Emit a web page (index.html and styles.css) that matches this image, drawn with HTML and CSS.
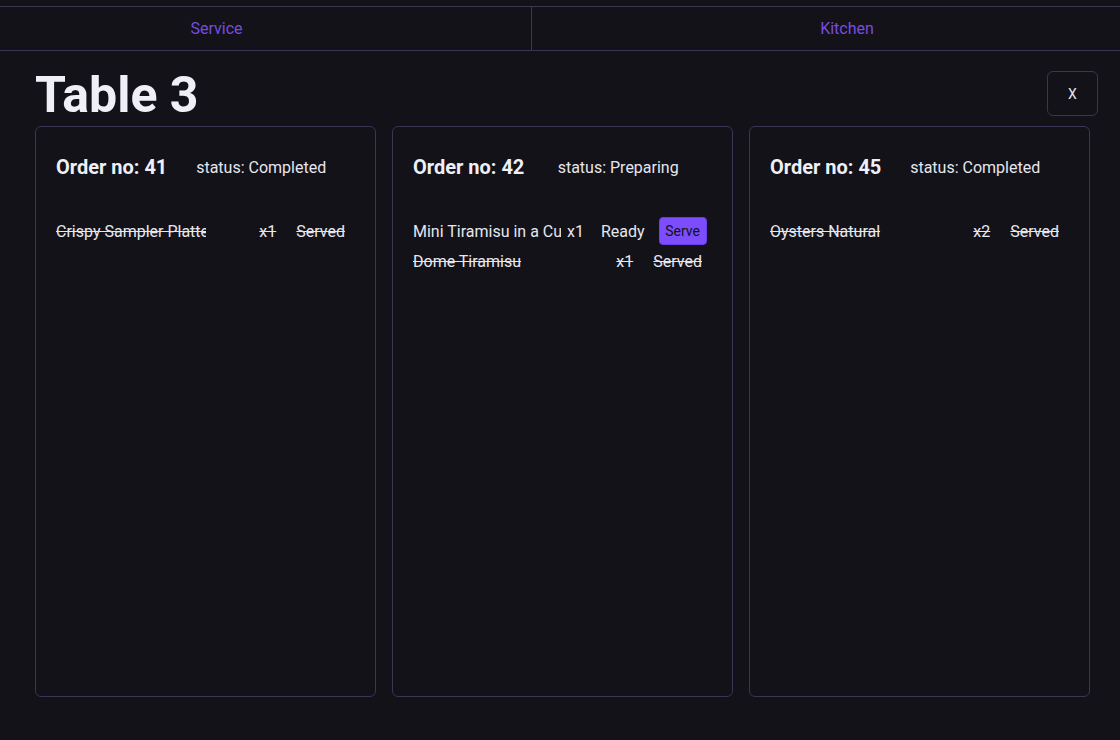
FILE: index.html
```html
<!DOCTYPE html>
<html>
<head>
<meta charset="utf-8">
<link rel="stylesheet" href="styles.css">
</head>
<body>
<nav class="tabs">
  <div class="tab tab-service">Service</div>
  <div class="tab tab-kitchen">Kitchen</div>
</nav>
<main class="page">
  <header class="page-head">
    <h1 class="title">Table 3</h1>
    <button class="close">X</button>
  </header>
  <section class="cards">
    <article class="card">
      <div class="card-head">
        <h2 class="order-no">Order no: 41</h2>
        <span class="status">status: Completed</span>
      </div>
      <div class="items">
        <div class="item done">
          <span class="name">Crispy Sampler Platter</span>
          <span class="spacer"></span>
          <span class="qty">x1</span>
          <span class="state">Served</span>
        </div>
      </div>
    </article>
    <article class="card">
      <div class="card-head">
        <h2 class="order-no">Order no: 42</h2>
        <span class="status">status: Preparing</span>
      </div>
      <div class="items">
        <div class="item action">
          <span class="name">Mini Tiramisu in a Cup</span>
          <span class="qty">x1</span>
          <span class="state">Ready</span>
          <button class="serve">Serve</button>
        </div>
        <div class="item done">
          <span class="name">Dome Tiramisu</span>
          <span class="spacer"></span>
          <span class="qty">x1</span>
          <span class="state">Served</span>
        </div>
      </div>
    </article>
    <article class="card">
      <div class="card-head">
        <h2 class="order-no">Order no: 45</h2>
        <span class="status">status: Completed</span>
      </div>
      <div class="items">
        <div class="item done">
          <span class="name">Oysters Natural</span>
          <span class="spacer"></span>
          <span class="qty">x2</span>
          <span class="state">Served</span>
        </div>
      </div>
    </article>
  </section>
</main>
</body>
</html>
```

FILE: styles.css
```css
html, body {
  margin: 0;
  padding: 0;
  background: #121218;
  color: #e6e6ef;
  font-family: Roboto, "Noto Sans", sans-serif;
}

.tabs {
  margin-top: 6px;
  display: flex;
  border-top: 1px solid #3a3455;
  border-bottom: 1px solid #3a3455;
  height: 43px;
}

.tab {
  display: flex;
  align-items: center;
  justify-content: center;
  font-size: 16px;
  color: #7a4be0;
}

.tab-service {
  width: 532px;
  padding-right: 98px;
  box-sizing: border-box;
  border-right: 1px solid #3a3455;
}

.tab-kitchen {
  flex: 1;
  padding-left: 42px;
}

.page {
  padding: 0 22px 0 35px;
}

.page-head {
  display: flex;
  justify-content: space-between;
  align-items: flex-start;
  padding-top: 13px;
}

.title {
  margin: 0;
  font-size: 50px;
  line-height: 62px;
  font-weight: 700;
  color: #efeff8;
}

.close {
  margin-top: 7px;
  width: 51px;
  height: 45px;
  background: transparent;
  border: 1px solid #3a3455;
  border-radius: 6px;
  color: #e6e6ef;
  font-family: Roboto, sans-serif;
  font-size: 14px;
  cursor: pointer;
}

.cards {
  margin-top: 0;
  display: grid;
  grid-template-columns: repeat(3, 341px);
  gap: 16px;
}

.card {
  height: 571px;
  box-sizing: border-box;
  border: 1px solid #3a3455;
  border-radius: 6px;
  padding: 27px 20px 20px;
}

.card-head {
  display: flex;
  align-items: center;
  height: 26px;
}

.order-no {
  margin: 0;
  font-size: 20px;
  font-weight: 700;
  line-height: 26px;
  color: #efeff8;
}

.status {
  flex: 1;
  text-align: center;
  font-size: 16px;
}

.items {
  margin-top: 36px;
  display: flex;
  flex-direction: column;
}

.item {
  display: flex;
  align-items: center;
  height: 30px;
  font-size: 16px;
  white-space: nowrap;
}

.name {
  width: 150px;
  flex-shrink: 0;
  overflow: hidden;
}

.action .name {
  width: 148px;
}

.spacer {
  flex: 1;
}

.qty, .state {
  padding: 0 10px;
}

.done .name, .done .qty, .done .state {
  text-decoration: line-through;
}

.action .qty {
  padding: 0 4px 0 6px;
}

.action .state {
  padding: 0 14px 0 13px;
}

.serve {
  width: 48px;
  height: 28px;
  padding: 0;
  background: #7c4dff;
  border: 1px solid #6a3ee6;
  border-radius: 4px;
  color: #111118;
  font-family: Roboto, sans-serif;
  font-size: 14px;
}
```
